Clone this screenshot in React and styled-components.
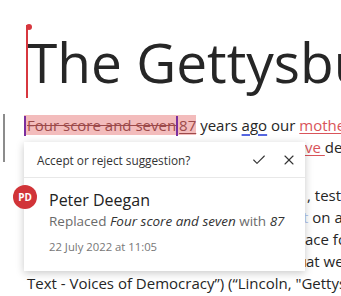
import React from 'react'
import styled, { createGlobalStyle } from 'styled-components'
import { Check, X } from 'lucide-react'

const GlobalStyle = createGlobalStyle`
    body {
        margin: 0;
        background: #ffffff;
        overflow: hidden;
        font-family: "Open Sans", "Noto Sans", sans-serif;
        color: #262626;
    }
`

const Page = styled.div`
    position: relative;
    width: 341px;
    height: 296px;
    overflow: hidden;
    padding: 25px 0 0 27px;
    box-sizing: border-box;
`

const Title = styled.h1`
    position: relative;
    margin: 0 0 16px 0;
    font-size: 55px;
    font-weight: 400;
    line-height: 73px;
    white-space: nowrap;
    color: #262626;
`

// another author's caret sitting at the start of the heading
const Cursor = styled.span`
    position: absolute;
    left: -1px;
    top: 0;
    width: 2px;
    height: 73px;
    background: #d7373f;

    &::after {
        content: '';
        position: absolute;
        left: 0px;
        top: -1px;
        width: 6px;
        height: 6px;
        border-radius: 50%;
        background: #d7373f;
    }
`

const TrackedGroup = styled.div`
    display: flex;
    margin-left: -24px;
`

const ChangeBar = styled.div`
    width: 2px;
    height: 48px;
    flex-shrink: 0;
    margin-right: 22px;
    background: #8c8c8c;
`

const Lines = styled.div`
    display: flex;
    flex-direction: column;
`

const Line = styled.div`
    font-size: 15px;
    line-height: 22px;
    height: 22px;
    white-space: nowrap;
    margin-left: ${props => props.shift || 0}px;
`

const Hidden = styled.span`
    display: inline-block;
    vertical-align: top;
    overflow: hidden;
    width: ${props => props.w}px;
`

const Highlight = styled.span`
    background: #f3bcbc;
`

const Caret = styled.span`
    display: inline-block;
    width: 2px;
    height: 20px;
    vertical-align: -5px;
    background: #7b2f9e;
    margin-right: 1px;
`

const Deleted = styled.span`
    color: #9c4a4a;
    text-decoration: line-through;
`

const Inserted = styled.span`
    color: #9c4a4a;
    text-decoration: underline;
    text-underline-offset: 2px;
`

const Suggest = styled.span`
    color: #d9545a;
    text-decoration: underline;
    text-underline-offset: 2px;
`

const Grammar = styled.span`
    text-decoration: underline;
    text-decoration-color: #5566e0;
    text-decoration-thickness: 2px;
    text-underline-offset: 3px;
`

const Faint = styled.span`
    color: #b4c6ee;
`

const Card = styled.div`
    position: absolute;
    left: 24px;
    top: 142px;
    width: 281px;
    height: 129px;
    background: #ffffff;
    box-shadow: 0 2px 8px rgba(0, 0, 0, 0.22);
    box-sizing: border-box;
`

const CardHeader = styled.div`
    display: flex;
    align-items: center;
    justify-content: space-between;
    height: 36px;
    padding: 0 8px 0 13px;
    border-bottom: 1px solid #e8e8e8;
    box-sizing: border-box;
    font-size: 11.8px;
    color: #333333;
`

const Actions = styled.div`
    display: flex;
    align-items: center;
    gap: 14px;
    padding-top: 1px;
    color: #333333;
`

const CardBody = styled.div`
    padding: 12px 0 0 25px;
`

const Avatar = styled.div`
    position: absolute;
    left: -11px;
    top: 43px;
    width: 24px;
    height: 24px;
    border-radius: 50%;
    background: #d13438;
    color: #ffffff;
    display: flex;
    align-items: center;
    justify-content: center;
    font-size: 10px;
    font-weight: 700;
`

const Name = styled.div`
    font-size: 16px;
    font-weight: 500;
    line-height: 21px;
    color: #222222;
`

const Summary = styled.div`
    font-size: 13.5px;
    line-height: 20px;
    color: #6b6b6b;

    em {
        color: #333333;
    }
`

const Stamp = styled.div`
    margin-top: 7px;
    font-size: 11.3px;
    line-height: 18px;
    color: #777777;
`

export default function App() {
    return (
        <>
            <GlobalStyle />
            <Page>
                <Title>
                    <Cursor />
                    The Gettysburg Address
                </Title>

                <TrackedGroup>
                    <ChangeBar />
                    <Lines>
                        <Line shift={-3}>
                            <Highlight>
                                <Caret />
                                <Deleted>Four score and seven</Deleted>
                                <Caret />
                                <Inserted>87</Inserted>
                            </Highlight>
                            {' '}years <Grammar>ago</Grammar> our <Suggest>mothers</Suggest> brought forth
                        </Line>
                        <Line>
                            <Hidden w={278}>on this continent, a new nation, conceived in Liberty, and dedicated to the</Hidden>
                            <Suggest>ve </Suggest>dedicated to the proposition
                        </Line>
                    </Lines>
                </TrackedGroup>

                <Line>that all men are created equal.</Line>
                <Line>
                    <Hidden w={280}>Now we are engaged in a great civil war</Hidden>, testing whether
                </Line>
                <Line>
                    <Hidden w={276}>that nation, or any nation so conceived and so dedicated, can long endure.</Hidden>
                    <Faint>t</Faint> on a great battle-field
                </Line>
                <Line>
                    <Hidden w={278}>of that war. We have come to dedicate a portion of that field, as a final resting pl</Hidden>ace for those
                </Line>
                <Line>
                    <Hidden w={279}>who here gave their lives that that nation might live. It is altogether fitting and proper th</Hidden>at we should
                </Line>
                <Line>
                    Text - Voices of Democracy”) (“Lincoln, "Gettysburg Address"
                </Line>

                <Card>
                    <CardHeader>
                        <span>Accept or reject suggestion?</span>
                        <Actions>
                            <Check size={16} strokeWidth={1.6} />
                            <X size={16} strokeWidth={1.6} />
                        </Actions>
                    </CardHeader>
                    <Avatar>PD</Avatar>
                    <CardBody>
                        <Name>Peter Deegan</Name>
                        <Summary>
                            Replaced <em>Four score and seven</em> with <em>87</em>
                        </Summary>
                        <Stamp>22 July 2022 at 11:05</Stamp>
                    </CardBody>
                </Card>
            </Page>
        </>
    )
}
